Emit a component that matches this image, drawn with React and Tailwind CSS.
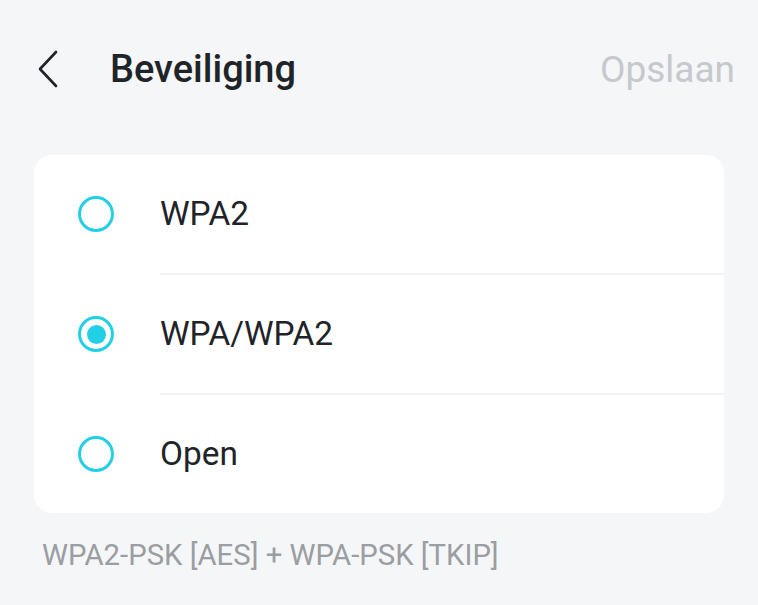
import React from "react";

function Radio({ checked }) {
  return (
    <div className="w-[36px] h-[36px] rounded-full border-[3px] border-[#22d0e6] flex items-center justify-center shrink-0">
      {checked && <div className="w-[19px] h-[19px] rounded-full bg-[#22d0e6]" />}
    </div>
  );
}

export default function App() {
  const options = [
    { label: "WPA2", checked: false },
    { label: "WPA/WPA2", checked: true },
    { label: "Open", checked: false },
  ];
  return (
    <div
      className="w-[758px] h-[605px] bg-[#f5f6f8] overflow-hidden"
      style={{ fontFamily: "Roboto, 'Noto Sans', sans-serif" }}
    >
      <div className="h-[138px] flex items-center pl-[36px] pr-[23px]">
        <svg width="24" height="38" viewBox="0 0 24 38" className="shrink-0">
          <path d="M20 2 L4 19 L20 36" fill="none" stroke="#1f2428" strokeWidth="2.6" strokeLinecap="round" strokeLinejoin="round" />
        </svg>
        <div className="ml-[50px] text-[38px] font-medium text-[#1f2428] leading-none">Beveiliging</div>
        <div className="ml-auto text-[37px] text-[#c5c8cc] leading-none">Opslaan</div>
      </div>
      <div className="mt-[17px] mx-[34px] bg-white rounded-[18px] overflow-hidden">
        {options.map((o, i) => (
          <div key={o.label}>
            {i > 0 && <div className="ml-[126px] h-[2px] bg-[#f2f3f5]" />}
            <div className="h-[118px] flex items-center pl-[44px]">
              <Radio checked={o.checked} />
              <div className="ml-[46px] text-[33.4px] text-[#1f2428] leading-none">{o.label}</div>
            </div>
          </div>
        ))}
      </div>
      <div className="mt-[25px] pl-[42px] text-[29.3px] text-[#9a9da1] leading-[34px]">
        WPA2-PSK [AES] + WPA-PSK [TKIP]
      </div>
    </div>
  );
}
